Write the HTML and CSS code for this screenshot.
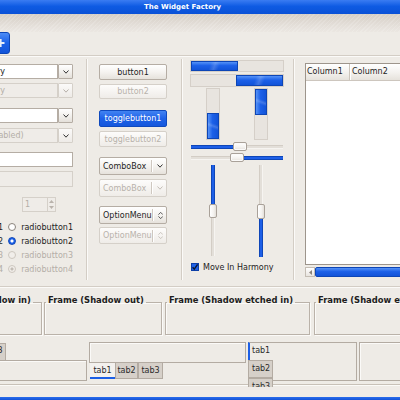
FILE: index.html
```html
<!DOCTYPE html>
<html lang="en">
<head>
<meta charset="utf-8">
<title>The Widget Factory</title>
<link rel="stylesheet" href="styles.css">
</head>
<body>
<div class="window">
  <div class="titlebar">The Widget Factory</div>
  <div class="menubar"></div>
  <div class="toolbar">
    <div class="tool-btn">
      <svg width="25" height="20" viewBox="0 0 25 20"><path d="M14.5 6v8M10.5 10h8" stroke="#e9eef8" stroke-width="2.2"/></svg>
    </div>
  </div>
  <div class="hsep"></div>

  <div class="main">
    <div class="col-inputs">
      <div class="cbe r1"><div class="cbe-entry">Combo box entry</div><div class="cbe-btn"><svg width="6" height="4" viewBox="0 0 6 4"><path d="M0.5 0.5L3 3.2L5.5 0.5" fill="none" stroke="#333" stroke-width="1"/></svg></div></div>
      <div class="cbe r2 disabled"><div class="cbe-entry">Combo box entry</div><div class="cbe-btn"><svg width="6" height="4" viewBox="0 0 6 4"><path d="M0.5 0.5L3 3.2L5.5 0.5" fill="none" stroke="#b4aea7" stroke-width="1"/></svg></div></div>
      <div class="cbe r3"><div class="cbe-entry">Combo box</div><div class="cbe-btn"><svg width="6" height="4" viewBox="0 0 6 4"><path d="M0.5 0.5L3 3.2L5.5 0.5" fill="none" stroke="#333" stroke-width="1"/></svg></div></div>
      <div class="cbe r4 disabled"><div class="cbe-entry">Combo box (disabled)</div><div class="cbe-btn"><svg width="6" height="4" viewBox="0 0 6 4"><path d="M0.5 0.5L3 3.2L5.5 0.5" fill="none" stroke="#333" stroke-width="1"/></svg></div></div>
      <div class="entry e1"></div>
      <div class="entry e2 disabled"></div>
      <div class="spin">
        <div class="spin-text">1</div>
        <div class="spin-arrows">
          <svg width="5" height="3" viewBox="0 0 5 3"><path d="M0 3L2.5 0L5 3Z" fill="#b9b3ac"/></svg>
          <svg width="5" height="3" viewBox="0 0 5 3"><path d="M0 0L2.5 3L5 0Z" fill="#b9b3ac"/></svg>
        </div>
      </div>
      <div class="radios">
        <div class="rrow"><div class="check-part"><span class="cbox"></span>checkbutton1</div><div class="radio-part"><span class="radio"></span>radiobutton1</div></div>
        <div class="rrow"><div class="check-part"><span class="cbox"></span>checkbutton2</div><div class="radio-part"><span class="radio on"></span>radiobutton2</div></div>
        <div class="rrow disabled"><div class="check-part"><span class="cbox"></span>checkbutton3</div><div class="radio-part"><span class="radio"></span>radiobutton3</div></div>
        <div class="rrow disabled"><div class="check-part"><span class="cbox"></span>checkbutton4</div><div class="radio-part"><span class="radio mixed"></span>radiobutton4</div></div>
      </div>
    </div>

    <div class="vsep vsep1"></div>

    <div class="col-buttons">
      <div class="btn b1">button1</div>
      <div class="btn b2 disabled">button2</div>
      <div class="btn t1 active">togglebutton1</div>
      <div class="btn t2 disabled">togglebutton2</div>
      <div class="btn menu cb1"><span class="menu-label">ComboBox</span><span class="menu-sep"></span><svg width="6" height="4" viewBox="0 0 6 4"><path d="M0.5 0.5L3 3.2L5.5 0.5" fill="none" stroke="#333" stroke-width="1"/></svg></div>
      <div class="btn menu cb2 disabled"><span class="menu-label">ComboBox</span><span class="menu-sep"></span><svg width="6" height="4" viewBox="0 0 6 4"><path d="M0.5 0.5L3 3.2L5.5 0.5" fill="none" stroke="#c2bcb5" stroke-width="1"/></svg></div>
      <div class="btn menu om1"><span class="menu-label">OptionMenu</span><span class="menu-sep"></span><svg width="6" height="9" viewBox="0 0 6 9"><path d="M0.5 3.5L3 1L5.5 3.5M0.5 5.5L3 8L5.5 5.5" fill="none" stroke="#444" stroke-width="1"/></svg></div>
      <div class="btn menu om2 disabled"><span class="menu-label">OptionMenu</span><span class="menu-sep"></span><svg width="6" height="9" viewBox="0 0 6 9"><path d="M0.5 3.5L3 1L5.5 3.5M0.5 5.5L3 8L5.5 5.5" fill="none" stroke="#c2bcb5" stroke-width="1"/></svg></div>
    </div>

    <div class="vsep vsep2"></div>

    <div class="col-range">
      <div class="pbar p1"><div class="pfill" style="width:47px"></div></div>
      <div class="pbar p2"><div class="pfill" style="width:47px"></div></div>
      <div class="vbars">
        <div class="vbar vb1"><div class="vfill" style="height:26px"></div></div>
        <div class="vbar vb2"><div class="vfill" style="height:26px"></div></div>
      </div>
      <div class="hscale hs1">
        <div class="trough fill" style="width:42px"></div>
        <div class="thumb"></div>
        <div class="trough" style="width:36px"></div>
      </div>
      <div class="hscale hs2">
        <div class="trough" style="width:39px"></div>
        <div class="thumb"></div>
        <div class="trough fill" style="width:39px"></div>
      </div>
      <div class="vscales">
        <div class="vscale vs1">
          <div class="vtrough fill" style="height:39px"></div>
          <div class="vthumb"></div>
          <div class="vtrough" style="height:38px"></div>
        </div>
        <div class="vscale vs2">
          <div class="vtrough" style="height:39px"></div>
          <div class="vthumb"></div>
          <div class="vtrough fill" style="height:38px"></div>
        </div>
      </div>
      <div class="harmony">
        <svg class="check" width="8" height="8" viewBox="0 0 8 8"><rect x="0.5" y="0.5" width="7" height="7" fill="#1f62e8" stroke="#0d3fa8"/><path d="M1.6 4.2L3.3 6.2L6.6 1.4" fill="none" stroke="#0b1630" stroke-width="1.4"/></svg>
        <span>Move In Harmony</span>
      </div>
    </div>

    <div class="vsep vsep3"></div>

    <div class="col-tree">
      <div class="tree">
        <div class="tree-head">
          <div class="th th1">Column1</div>
          <div class="th th2">Column2</div>
        </div>
        <div class="tree-body"></div>
      </div>
      <div class="hscroll">
        <div class="scroll-arrow"><svg width="3" height="5" viewBox="0 0 3 5"><path d="M3 0L0 2.5L3 5Z" fill="#8a837b"/></svg></div>
        <div class="scroll-thumb"></div>
      </div>
    </div>
  </div>

  <div class="hsep"></div>

  <div class="frames">
    <fieldset class="frame f1"><legend>Frame (Shadow in)</legend></fieldset>
    <fieldset class="frame f2"><legend>Frame (Shadow out)</legend></fieldset>
    <fieldset class="frame f3"><legend>Frame (Shadow etched in)</legend></fieldset>
    <fieldset class="frame f4"><legend>Frame (Shadow etched out)</legend></fieldset>
  </div>

  <div class="notebooks">
    <div class="nb nb1">
      <div class="tabs-top">
        <div class="tab sel">tab1</div><div class="tab">tab2</div><div class="tab">tab3</div>
      </div>
      <div class="nb-page"></div>
    </div>
    <div class="nb nb2">
      <div class="nb-page"></div>
      <div class="tabs-bottom">
        <div class="tab sel">tab1</div><div class="tab">tab2</div><div class="tab">tab3</div>
      </div>
    </div>
    <div class="nb nb3">
      <div class="tabs-left">
        <div class="tab sel">tab1</div><div class="tab">tab2</div><div class="tab">tab3</div>
      </div>
      <div class="nb-page"></div>
    </div>
    <div class="nb nb4">
      <div class="nb-page"></div>
    </div>
  </div>

  <div class="statusbar"></div>
  <div class="bluebar"></div>
</div>
</body>
</html>
```

FILE: styles.css
```css
* { box-sizing: border-box; }
html, body { margin: 0; padding: 0; }
body {
  width: 400px; height: 400px; overflow: hidden;
  background: #eeebe6;
  font-family: "DejaVu Sans", "Liberation Sans", sans-serif;
  font-size: 8px; color: #1d1d1d;
}
.window { width: 400px; height: 400px; overflow: hidden; display: flex; flex-direction: column; }

.titlebar {
  flex: none; height: 14px; padding-left: 144px;
  background: linear-gradient(#3a7cf2, #0e5be3 45%, #0a51d6);
  color: #fff; font-weight: bold; font-size: 7px; line-height: 14px; white-space: nowrap;
}
.menubar {
  flex: none; height: 18px;
  background:
    repeating-linear-gradient(135deg, rgba(255,255,255,0.15) 0 1px, transparent 1px 3px),
    linear-gradient(#d6cfc6, #e3ded8 60%, #ebe7e2);
}
.toolbar { flex: none; height: 23px; }
.tool-btn {
  margin-left: -15px; width: 25px; height: 22px;
  background: linear-gradient(#4c8cf6, #1c61e8 50%, #1254d9);
  border: 1px solid #0c46b8; border-radius: 3px;
}
.tool-btn svg { display: block; }
.hsep { flex: none; height: 2px; border-top: 1px solid #d3cdc5; border-bottom: 1px solid #fbfaf8; }

.main { flex: none; height: 229px; display: flex; align-items: flex-start; }
.vsep {
  flex: none; width: 2px; align-self: stretch; margin-top: 2px; margin-bottom: 6px;
  border-left: 1px solid #d3cdc5; border-right: 1px solid #fbfaf8;
}
.vsep1 { margin-left: 13px; }
.vsep2 { margin-left: 14px; }
.vsep3 { margin-left: 9px; }

/* column 1 */
.col-inputs { flex: none; margin-left: -68px; width: 141px; display: flex; flex-direction: column; }
.cbe { display: flex; height: 15px; }
.cbe-entry {
  flex: 1; background: #fff; border: 1px solid #b5ada4; padding-left: 3px;
  line-height: 13px; white-space: nowrap; overflow: hidden;
}
.cbe-btn {
  width: 15px; border: 1px solid #b5ada4; border-radius: 1px;
  background: linear-gradient(#ffffff, #f3f1ee 50%, #e4e0da);
  display: flex; align-items: center; justify-content: center;
}
.cbe.disabled .cbe-entry { background: #efece8; border-color: #d5d0c9; color: #b4aea7; }
.cbe.disabled .cbe-btn { border-color: #d5d0c9; background: linear-gradient(#fbfaf9, #eeebe7); }
.r1 { margin-top: 7px; }
.r2 { margin-top: 4px; }
.r3 { margin-top: 10px; }
.r4 { margin-top: 5px; }
.entry { height: 15px; background: #fff; border: 1px solid #b5ada4; }
.entry.disabled { background: #efece8; border-color: #d5d0c9; height: 16px; }
.e1 { margin-top: 9px; }
.e2 { margin-top: 4px; }
.spin {
  margin-top: 10px; margin-left: 90px; width: 34px; height: 15px; display: flex;
  border: 1px solid #d5d0c9; background: #efece8; color: #b4aea7;
}
.spin-text { flex: 1; padding-left: 2px; line-height: 13px; }
.spin-arrows {
  width: 8px; border-left: 1px solid #d5d0c9;
  display: flex; flex-direction: column; align-items: center; justify-content: space-evenly;
}
.spin-arrows svg { display: block; }
.radios { margin-top: 8px; display: flex; flex-direction: column; }
.rrow { height: 14px; display: flex; align-items: center; white-space: nowrap; }
.check-part { width: 72px; display: flex; justify-content: flex-end; align-items: center; }
.cbox { width: 8px; height: 8px; border: 1px solid #8c857d; background: #fff; margin-right: 4px; }
.radio-part { margin-left: 5px; display: flex; align-items: center; }
.radio {
  width: 8px; height: 8px; border-radius: 50%; margin-right: 5px;
  border: 1px solid #8a837b; background: #fff;
}
.radio.on { border-color: #0f47b8; background: radial-gradient(circle, #fff 0 1.3px, #1e62e9 1.8px); }
.rrow.disabled { color: #b4aea7; }
.rrow.disabled .radio { border-color: #cdc7bf; background: #f1eeea; }
.rrow.disabled .radio.mixed { background: radial-gradient(circle, #c2bcb5 0 1.3px, #f1eeea 1.8px); }
.rrow.disabled .cbox { border-color: #cdc7bf; background: #f1eeea; }

/* column 2 */
.col-buttons { flex: none; margin-left: 11px; width: 68px; display: flex; flex-direction: column; }
.btn {
  height: 16px; border: 1px solid #b5ada4; border-radius: 2px;
  background: linear-gradient(#ffffff, #f5f3f0 50%, #e6e2dc);
  display: flex; align-items: center; justify-content: center; white-space: nowrap;
}
.btn.disabled { border-color: #d5d0c9; color: #b8b2ab; background: linear-gradient(#fdfcfb, #efece8); }
.btn.active {
  border-color: #0f49bd; color: #fff;
  background: linear-gradient(#4283f2, #1e62e8 50%, #1557dc);
}
.b1 { margin-top: 7px; }
.b2 { margin-top: 4px; height: 15px; }
.t1 { margin-top: 11px; height: 17px; }
.t2 { margin-top: 4px; }
.cb1 { margin-top: 10px; height: 18px; }
.cb2 { margin-top: 4px; height: 18px; }
.om1 { margin-top: 9px; height: 18px; }
.om2 { margin-top: 3px; height: 17px; }
.btn.menu { justify-content: flex-start; padding-left: 3px; }
.menu-label { flex: 1; }
.menu-sep { width: 2px; height: 12px; border-left: 1px solid #cfc8c0; border-right: 1px solid #fff; margin-right: 4px; }
.btn.menu svg { margin-right: 3px; display: block; }

/* column 3 */
.col-range { flex: none; margin-left: 7px; width: 94px; display: flex; flex-direction: column; }
.pbar { height: 12px; border: 1px solid #d5cfc8; background: #e8e4df; display: flex; }
.p1 { margin-top: 3px; }
.p2 { margin-top: 2px; height: 13px; justify-content: flex-end; }
.pfill, .vfill {
  border: 1px solid #0d45b6;
  background:
    linear-gradient(110deg, transparent 40%, rgba(255,255,255,0.18) 50%, transparent 60%),
    linear-gradient(#5592f7, #1c60e8 45%, #1253d8);
}
.vbars { margin-top: 1px; height: 52px; display: flex; }
.vbar { width: 14px; border: 1px solid #d5cfc8; background: #e8e4df; display: flex; flex-direction: column; }
.vb1 { margin-left: 16px; justify-content: flex-end; }
.vb2 { margin-left: 34px; }
.vfill {
  background:
    linear-gradient(20deg, transparent 40%, rgba(255,255,255,0.18) 50%, transparent 60%),
    linear-gradient(90deg, #5592f7, #1c60e8 45%, #1253d8);
}
.hscale { display: flex; align-items: center; margin-left: 1px; height: 9px; }
.hs1 { margin-top: 2px; }
.hs2 { margin-top: 2px; }
.trough { height: 4px; background: #e3dfd9; border-top: 1px solid #d3cdc5; border-bottom: 1px solid #f6f4f1; }
.trough.fill { background: #1d5fe7; border-top-color: #0e46b8; border-bottom-color: #0e46b8; }
.thumb {
  width: 14px; height: 9px; border: 1px solid #a9a199; border-radius: 2px;
  background: linear-gradient(#ffffff, #f4f2ef 60%, #e4e0da);
  box-shadow: inset 0 0 0 1px #fbfaf9;
}
.vscales { margin-top: 3px; height: 93px; display: flex; }
.vscale { width: 8px; display: flex; flex-direction: column; align-items: center; }
.vs1 { margin-left: 19px; }
.vs2 { margin-left: 40px; }
.vtrough { width: 4px; background: #e3dfd9; border-left: 1px solid #d3cdc5; border-right: 1px solid #f6f4f1; }
.vtrough.fill { background: #1d5fe7; border-left-color: #0e46b8; border-right-color: #0e46b8; }
.vthumb {
  width: 8px; height: 14px; border: 1px solid #a9a199; border-radius: 2px;
  background: linear-gradient(90deg, #ffffff, #f4f2ef 60%, #e4e0da);
}
.vs2 .vthumb { height: 15px; }
.harmony { margin-top: 4px; margin-left: 1px; height: 10px; display: flex; align-items: center; white-space: nowrap; }
.harmony .check { display: block; margin-right: 4px; }

/* column 4 */
.col-tree { flex: none; margin-left: 10px; width: 160px; display: flex; flex-direction: column; }
.tree { margin-top: 6px; height: 202px; border: 1px solid #9d958c; background: #fff; display: flex; flex-direction: column; }
.tree-head {
  height: 17px; display: flex; border-bottom: 1px solid #cdc6be;
  background: linear-gradient(#ffffff, #f3f1ee 55%, #e6e2dc);
}
.th { line-height: 16px; white-space: nowrap; }
.th1 { width: 44px; padding-left: 1px; border-right: 1px solid #cbc4bb; box-shadow: 1px 0 0 #fff; }
.th2 { flex: 1; padding-left: 2px; }
.hscroll { margin-top: 2px; height: 10px; display: flex; }
.scroll-arrow {
  width: 10px; border: 1px solid #c4bdb4; background: linear-gradient(#fff, #e8e4df);
  display: flex; align-items: center; justify-content: center;
}
.scroll-arrow svg { display: block; }
.scroll-thumb {
  flex: 1; border: 1px solid #0d45b6; border-radius: 2px 0 0 2px;
  background: linear-gradient(#5592f7, #1c60e8 45%, #1253d8);
}

/* frames */
.frames { flex: none; display: flex; margin-top: 7px; height: 40px; white-space: nowrap; }
.frame {
  flex: none; margin: 0; padding: 0; height: 40px; min-width: 0;
  border: 1px solid #bab2a9; box-shadow: inset 1px 1px 0 #fbfaf8, 1px 1px 0 #fbfaf8;
}
.frame legend { font-weight: bold; font-size: 8.4px; line-height: 10px; padding: 0 2px 4px; margin-left: 1px; }
.f1 { margin-left: -62px; width: 104px; }
.f2 { margin-left: 2px; width: 118px; }
.f3 { margin-left: 3px; width: 145px; }
.f4 { margin-left: 4px; width: 140px; }

/* notebooks */
.notebooks {
  flex: none; display: flex; margin-top: 7px; height: 45px; overflow: hidden;
  background: linear-gradient(transparent 42px, #c8c1b8 42px, #c8c1b8 43px, #fbfaf8 43px, #fbfaf8 44px, transparent 44px);
}
.nb { flex: none; display: flex; }
.tab {
  border: 1px solid #b3aba2; background: #d6d0c9; color: #2a2a2a;
  line-height: 14px; text-align: center; white-space: nowrap;
}
.tab.sel { background: #f1eeea; }
.nb-page { border: 1px solid #b3aba2; box-shadow: inset 1px 1px 0 #fbfaf8; background: #eeebe6; }

.nb1 { margin-left: -70px; width: 157px; flex-direction: column; height: 39px; }
.nb1 .tabs-top { height: 18px; display: flex; align-items: flex-end; padding-left: 2px; }
.nb1 .tab { width: 24px; height: 17px; border-bottom: none; }
.nb1 .tab + .tab { width: 25px; }
.nb1 .nb-page { height: 21px; }

.nb2 { margin-left: 2px; width: 157px; flex-direction: column; height: 37px; }
.nb2 .nb-page { height: 21px; }
.tabs-bottom { height: 16px; display: flex; padding-left: 1px; }
.tabs-bottom .tab { height: 16px; border-top: none; line-height: 15px; }
.tabs-bottom .tab:nth-child(1) { width: 25px; border: none; border-bottom: 2px solid #1c5fe6; background: #f3f1ee; }
.tabs-bottom .tab:nth-child(2) { width: 23px; }
.tabs-bottom .tab:nth-child(3) { width: 25px; }

.nb3 { margin-left: 2px; width: 109px; height: 45px; align-items: flex-start; }
.tabs-left { width: 25px; display: flex; flex-direction: column; }
.tabs-left .tab { height: 18px; line-height: 16px; text-align: left; padding-left: 3px; }
.tabs-left .tab.sel { border: none; border-top: 1px solid #b3aba2; border-left: 2px solid #1c5fe6; background: #eeebe6; padding-left: 2px; }
.tabs-left .tab:nth-child(3) { height: 12px; }
.nb3 .nb-page { flex: 1; height: 39px; border-left: none; box-shadow: none; border-top: 1px solid #b3aba2; }

.nb4 { margin-left: 2px; width: 100px; height: 39px; }
.nb4 .nb-page { flex: 1; }

.statusbar { flex: none; height: 10px; background: #efebe7; }
.bluebar { flex: none; height: 3px; background: linear-gradient(#2a6cec, #1252d8); }
```
